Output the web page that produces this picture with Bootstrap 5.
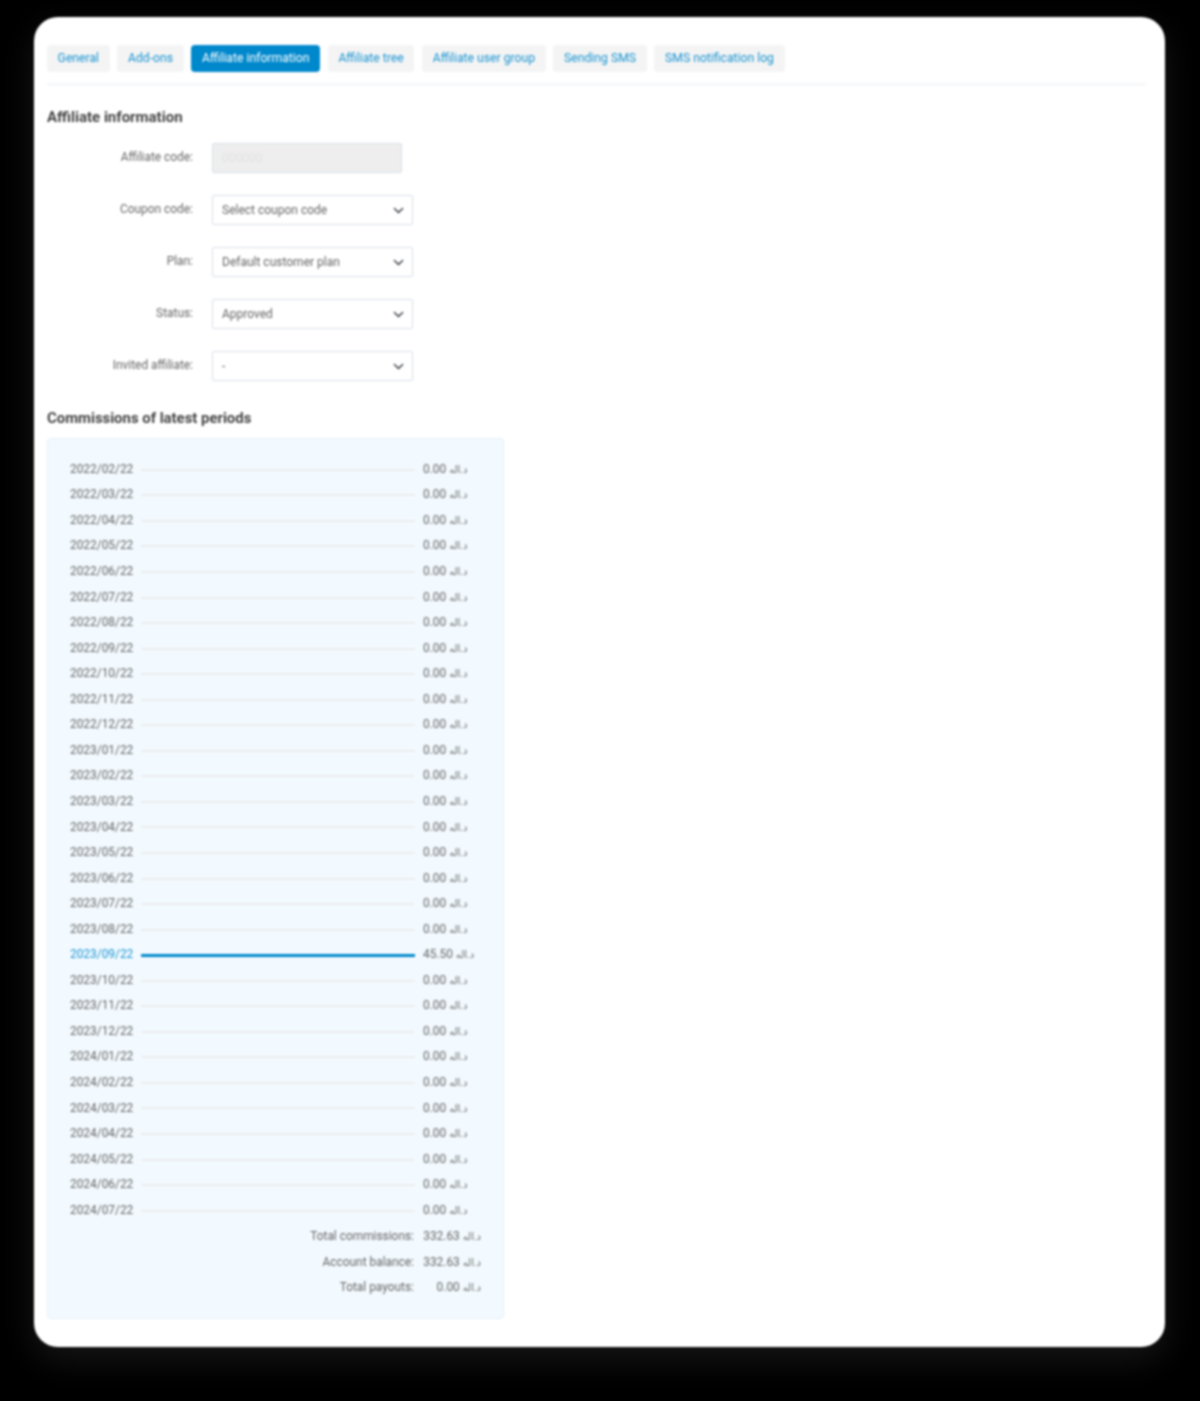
<!DOCTYPE html>
<html lang="en">
<head>
  <meta charset="UTF-8" />
  <meta name="viewport" content="width=device-width, initial-scale=1" />
  <title>Affiliate information</title>
  <link href="https://cdn.jsdelivr.net/npm/bootstrap@5.3.0/dist/css/bootstrap.min.css" rel="stylesheet" />
  <style>
    body {
      background-color: #000;
      font-family: Roboto, "DejaVu Sans", sans-serif;
      font-size: 11.9px;
      color: #555;
      padding: 17px 35px 54px 34px;
    }

    .page-sheet {
      height: 1330px;
      padding: 28px 19px 0 13px;
      border: 0;
      border-radius: 24px;
      box-shadow: 0 12px 34px rgba(255, 255, 255, 0.09);
      filter: blur(0.8px);
    }

    .tab-bar {
      gap: 7.8px;
      padding-bottom: 12px;
      border-bottom: 1px solid #e9ecf2;
    }

    .tab-bar .nav-link {
      height: 27px;
      padding: 0 10.6px;
      line-height: 26px;
      font-size: 12.2px;
      color: #1a94d2;
      background-color: #f4f4f4;
      border-radius: 4px;
    }

    .tab-bar .nav-link.active {
      color: #fff;
      background-color: #0088cc;
    }

    .block-title {
      margin: 23px 0 17px;
      font-family: Roboto, sans-serif;
      font-size: 15px;
      line-height: 18px;
      font-weight: 700;
      color: #444;
    }

    .field-row {
      margin-bottom: 22px;
      gap: 19px;
    }

    .field-label {
      width: 146px;
      text-align: right;
      color: #666;
    }

    .field-row .form-control,
    .field-row .form-select {
      height: 30px;
      padding: 0 9px;
      font-size: 12px;
      color: #666;
      border-color: #d8dfe8;
      border-radius: 2px;
    }

    .field-row .form-control {
      width: 190px;
      color: #e2e2e2;
      background-color: #eee;
    }

    .field-row .form-select {
      width: 201px;
      background-position: right 6px center;
      background-size: 15px 11px;
    }

    .second-title {
      margin: 6px 0 11px;
      font-size: 14.9px;
    }

    .stats-panel {
      width: 457px;
      height: 881px;
      padding: 18px 22px 0;
      background-color: #f3faff;
      border: 1px solid #e4f1fa;
      border-radius: 4px;
    }

    .stat-list {
      margin-bottom: 1px;
    }

    .stat-row {
      height: 25.55px;
      gap: 8px;
      color: #666;
      white-space: nowrap;
    }

    .stat-date {
      width: 63px;
    }

    .stat-bar {
      width: 274px;
      height: 2px;
      background-color: #ececec;
    }

    .stat-row.is-current .stat-date {
      color: #1a94d2;
    }

    .stat-row.is-current .stat-bar {
      height: 3px;
      background-color: #0088cc;
    }

    .money-unit {
      font-size: 10px;
    }

    .total-row {
      height: 25.5px;
      gap: 8px;
      color: #666;
      white-space: nowrap;
    }

    .total-label {
      width: 344px;
      text-align: right;
    }

    .total-value {
      width: 59px;
      text-align: right;
    }
  </style>
</head>
<body>
  <div class="card page-sheet">
    <ul class="nav tab-bar">
      <li class="nav-item"><a class="nav-link" href="#">General</a></li>
      <li class="nav-item"><a class="nav-link" href="#">Add-ons</a></li>
      <li class="nav-item"><a class="nav-link active" href="#">Affiliate information</a></li>
      <li class="nav-item"><a class="nav-link" href="#">Affiliate tree</a></li>
      <li class="nav-item"><a class="nav-link" href="#">Affiliate user group</a></li>
      <li class="nav-item"><a class="nav-link" href="#">Sending SMS</a></li>
      <li class="nav-item"><a class="nav-link" href="#">SMS notification log</a></li>
    </ul>

    <h5 class="block-title">Affiliate information</h5>

    <div class="d-flex align-items-center field-row">
      <label class="field-label">Affiliate code:</label>
      <input class="form-control" type="text" value="000000" disabled />
    </div>
    <div class="d-flex align-items-center field-row">
      <label class="field-label">Coupon code:</label>
      <select class="form-select"><option>Select coupon code</option></select>
    </div>
    <div class="d-flex align-items-center field-row">
      <label class="field-label">Plan:</label>
      <select class="form-select"><option>Default customer plan</option></select>
    </div>
    <div class="d-flex align-items-center field-row">
      <label class="field-label">Status:</label>
      <select class="form-select"><option>Approved</option></select>
    </div>
    <div class="d-flex align-items-center field-row">
      <label class="field-label">Invited affiliate:</label>
      <select class="form-select"><option>-</option></select>
    </div>

    <h5 class="block-title second-title">Commissions of latest periods</h5>

    <div class="stats-panel">
      <div class="stat-list" id="stat-rows"></div>
      <div class="d-flex align-items-center total-row">
        <span class="total-label">Total commissions:</span>
        <span class="total-value">332.63 <span class="money-unit">د.اله</span></span>
      </div>
      <div class="d-flex align-items-center total-row">
        <span class="total-label">Account balance:</span>
        <span class="total-value">332.63 <span class="money-unit">د.اله</span></span>
      </div>
      <div class="d-flex align-items-center total-row">
        <span class="total-label">Total payouts:</span>
        <span class="total-value">0.00 <span class="money-unit">د.اله</span></span>
      </div>
    </div>
  </div>

  <script>
    const container = document.getElementById('stat-rows');
    let year = 2022;
    let month = 2;

    for (let i = 0; i < 30; i++) {
      const date = `${year}/${String(month).padStart(2, '0')}/22`;
      const current = date === '2023/09/22';

      const row = document.createElement('div');
      row.className = 'd-flex align-items-center stat-row' + (current ? ' is-current' : '');
      row.innerHTML = `<span class="stat-date">${date}</span><span class="stat-bar"></span><span>${current ? '45.50' : '0.00'} <span class="money-unit">د.اله</span></span>`;
      container.appendChild(row);

      month++;
      if (month > 12) {
        month = 1;
        year++;
      }
    }
  </script>
  <script src="https://cdn.jsdelivr.net/npm/bootstrap@5.3.0/dist/js/bootstrap.bundle.min.js"></script>
</body>
</html>
